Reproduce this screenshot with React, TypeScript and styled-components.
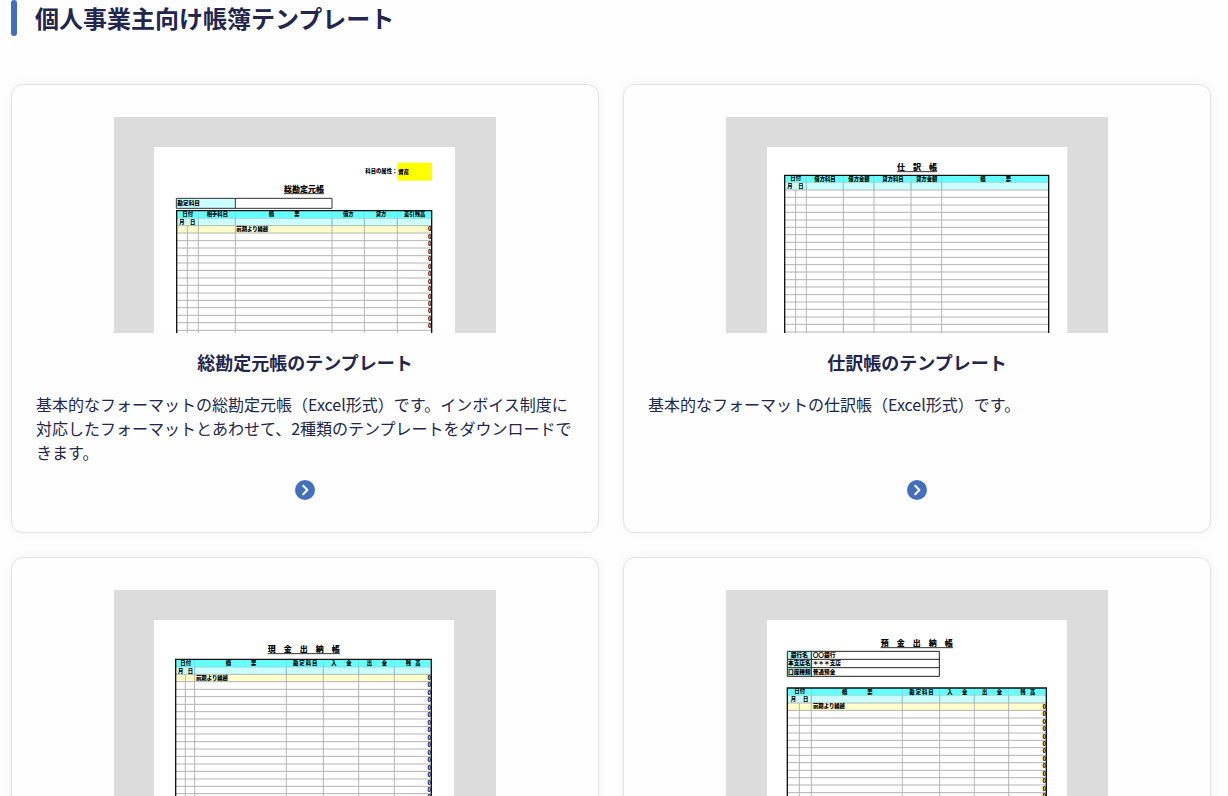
import React from "react";
import styled, { createGlobalStyle } from "styled-components";

const GlobalStyle = createGlobalStyle`
  *, *::before, *::after {
    box-sizing: border-box;
  }
  body {
    margin: 0;
    background: #fefefe;
    color: #22264c;
    font-family: "Noto Sans CJK JP", "Noto Sans", sans-serif;
    font-size: 16px;
    line-height: 24px;
  }
`;

const Page = styled.main`
  padding: 0 17px 24px 11px;
`;

const Heading = styled.h2`
  display: flex;
  gap: 18px;
  margin: 0 0 48px;
  font-size: 24px;
  line-height: 36px;
  font-weight: 700;

  &::before {
    content: "";
    width: 6px;
    border-radius: 3px;
    background: #446fbd;
  }
`;

const CardGrid = styled.div`
  display: grid;
  grid-template-columns: repeat(2, minmax(0, 1fr));
  gap: 24px;
`;

const Card = styled.a`
  display: flex;
  flex-direction: column;
  align-items: center;
  gap: 16px;
  padding: 32px 24px;
  border: 1px solid #e2e2e2;
  border-radius: 12px;
  background: #fefefe;
  box-shadow: 0 0 12px rgba(0, 0, 0, 0.05);
  color: inherit;
  text-decoration: none;
`;

const Thumbnail = styled.svg`
  display: block;
  width: 382px;
  max-width: 100%;
  height: auto;
  background: #dcdcdc;
`;

const CardTitle = styled.h3`
  margin: 0;
  font-size: 18px;
  line-height: 27px;
  font-weight: 700;
  text-align: center;
`;

const Description = styled.p`
  align-self: stretch;
  flex: 1;
  margin: 0;
`;

const ArrowBadge = styled.svg`
  display: block;
  flex: none;
  width: 20px;
  height: 20px;
`;

const SheetText = styled.text<{ $size?: number }>`
  font-family: "Noto Sans CJK JP", sans-serif;
  font-size: ${({ $size = 16 }) => $size}px;
  font-weight: 900;
  fill: #000;
`;

type Label = [text: string, x: number, y: number];

interface Sheet {
  origin: [number, number];
  paper: [number, number, number];
  title: Label;
  titleWidth: number;
  left: number;
  right: number;
  top: number;
  subTop: number;
  bodyTop: number;
  columns: number[];
  headers: Label[];
  carried?: Label;
  extra?: React.ReactNode;
}

const ROW = 22.4;
const BOTTOM = 600;
const VIEW_HEIGHT = 648;

/* Drawn at three units to the pixel, so the sheet scales like a picture. */
function SheetPreview({ sheet, label }: { sheet: Sheet; label: string }) {
  const { left, right, top, subTop, bodyTop, columns } = sheet;
  const width = right - left;
  const rows: number[] = [];
  for (let i = 0; bodyTop + i * ROW < BOTTOM; i += 1) {
    rows.push(Math.round(bodyTop + i * ROW));
  }
  const balanceRows = rows.filter((y) => y + ROW + sheet.origin[1] <= VIEW_HEIGHT);
  const [paperLeft, paperTop, paperRight] = sheet.paper;
  const [title, titleX, titleY] = sheet.title;

  return (
    <Thumbnail viewBox={`0 0 1146 ${VIEW_HEIGHT}`} role="img" aria-label={label}>
      <g transform={`translate(${sheet.origin.join(" ")})`}>
        <rect x={paperLeft} y={paperTop} width={paperRight - paperLeft} height={650} fill="#fff" />
        <SheetText $size={24} x={titleX} y={titleY}>{title}</SheetText>
        <path d={`M${titleX} ${titleY + 5}h${sheet.titleWidth}`} stroke="#333" strokeWidth={3} />
        {sheet.extra}
        <rect x={left} y={top} width={width} height={subTop - top} fill="#66ffff" />
        <rect x={left} y={subTop} width={width} height={bodyTop - subTop} fill="#ccffff" />
        {sheet.carried && <rect x={left} y={bodyTop} width={width} height={ROW} fill="#ffffcc" />}
        <g stroke="#b4b4b4" strokeWidth={3}>
          {rows.map((y) => <path key={y} d={`M${left} ${y}H${right}`} />)}
          {columns.map((x, i) => (
            <path key={x} d={`M${x} ${i === 0 ? bodyTop : subTop}V${BOTTOM}`} />
          ))}
        </g>
        <g stroke="#7fcccc" strokeWidth={2}>
          <path d={`M${left} ${subTop}H${right}`} />
          {columns.slice(1).map((x) => <path key={x} d={`M${x} ${top}V${bodyTop}`} />)}
        </g>
        <path d={`M${left} ${BOTTOM}V${top}H${right}V${BOTTOM}`} fill="none" stroke="#111" strokeWidth={4} />
        {sheet.headers.map(([text, x, y]) => (
          <SheetText key={`${text}${x}`} x={x} y={y} dy={6} textAnchor="middle">{text}</SheetText>
        ))}
        {sheet.carried && (
          <SheetText x={sheet.carried[1]} y={sheet.carried[2]} dy={6}>{sheet.carried[0]}</SheetText>
        )}
        {sheet.carried && balanceRows.map((y) => (
          <SheetText key={y} $size={17} x={right - 1} y={y + 17} textAnchor="end">0</SheetText>
        ))}
      </g>
    </Thumbnail>
  );
}

const generalLedger: Sheet = {
  origin: [108, 84],
  paper: [12, 6, 915],
  title: ["総勘定元帳", 402, 141],
  titleWidth: 120,
  left: 80,
  right: 845,
  top: 197,
  subTop: 220,
  bodyTop: 242,
  columns: [112, 145, 256, 546, 643, 742],
  headers: [
    ["日付", 113, 207], ["相手科目", 202, 207], ["摘", 364, 207], ["要", 441, 207],
    ["借方", 595, 207], ["貸方", 693, 207], ["差引残高", 794, 207],
    ["月", 96, 231], ["日", 128, 231],
  ],
  carried: ["前期より繰越", 259, 253],
  extra: (
    <>
      <rect x={742} y={53} width={104} height={54} fill="#ffff00" />
      <SheetText x={646} y={84}>科目の属性：</SheetText>
      <SheetText x={745} y={87}>資産</SheetText>
      <rect x={79} y={160} width={177} height={30} fill="#ccffff" />
      <path d="M79 160H546V190H79ZM256 160V190" fill="none" stroke="#333" strokeWidth={3} />
      <SheetText $size={17} x={82} y={180}>勘定科目</SheetText>
    </>
  ),
};

const journal: Sheet = {
  origin: [117, 84],
  paper: [6, 6, 907],
  title: ["仕　訳　帳", 396, 75],
  titleWidth: 120,
  left: 59,
  right: 851,
  top: 91,
  subTop: 112,
  bodyTop: 135,
  columns: [92, 124, 235, 327, 438, 530],
  headers: [
    ["日付", 92, 100], ["借方科目", 180, 103], ["借方金額", 282, 103],
    ["貸方科目", 384, 103], ["貸方金額", 485, 103], ["摘", 654, 103], ["要", 730, 103],
    ["月", 75, 124], ["日", 108, 124],
  ],
};

const cashBook: Sheet = {
  origin: [108, 75],
  paper: [12, 15, 912],
  title: ["現　金　出　納　帳", 353, 111],
  titleWidth: 217,
  left: 77,
  right: 844,
  top: 133,
  subTop: 156,
  bodyTop: 178,
  columns: [106, 134, 409, 520, 626, 733],
  headers: [
    ["日付", 107, 145], ["摘", 235, 145], ["要", 311, 145],
    ["勘", 437, 145], ["定", 456, 145], ["科", 475, 145], ["目", 494, 145],
    ["入", 552, 145], ["金", 597, 145], ["出", 658, 145], ["金", 703, 145],
    ["残", 775, 145], ["高", 804, 145], ["月", 92, 168], ["日", 121, 168],
  ],
  carried: ["前期より繰越", 138, 190],
};

const depositBook: Sheet = {
  origin: [117, 75],
  paper: [6, 15, 906],
  title: ["預　金　出　納　帳", 347, 93],
  titleWidth: 217,
  left: 67,
  right: 844,
  top: 219,
  subTop: 241,
  bodyTop: 264,
  columns: [103, 139, 412, 524, 628, 731],
  headers: [
    ["日付", 104, 229], ["摘", 239, 231], ["要", 315, 231],
    ["勘", 441, 231], ["定", 460, 231], ["科", 479, 231], ["目", 498, 231],
    ["入", 555, 231], ["金", 599, 231], ["出", 659, 231], ["金", 703, 231],
    ["残", 774, 231], ["高", 803, 231], ["月", 85, 253], ["日", 122, 253],
  ],
  carried: ["前期より繰越", 144, 274],
  extra: (
    <>
      <rect x={67} y={109} width={72} height={75} fill="#b3f5f5" />
      <path
        d="M67 109H523V184H67ZM139 109V184M67 133H523M67 158H523"
        fill="none"
        stroke="#222"
        strokeWidth={3}
      />
      <SheetText $size={17} x={103} y={127} textAnchor="middle">銀行名</SheetText>
      <SheetText $size={17} x={103} y={151} textAnchor="middle">本支店名</SheetText>
      <SheetText $size={17} x={103} y={177} textAnchor="middle">口座種類</SheetText>
      <SheetText $size={17} x={143} y={127}>〇〇銀行</SheetText>
      <SheetText $size={17} x={143} y={151}>＊＊＊支店</SheetText>
      <SheetText $size={17} x={143} y={177}>普通預金</SheetText>
    </>
  ),
};

const templates = [
  {
    title: "総勘定元帳のテンプレート",
    description:
      "基本的なフォーマットの総勘定元帳（Excel形式）です。インボイス制度に対応したフォーマットとあわせて、2種類のテンプレートをダウンロードできます。",
    sheet: generalLedger,
  },
  {
    title: "仕訳帳のテンプレート",
    description: "基本的なフォーマットの仕訳帳（Excel形式）です。",
    sheet: journal,
  },
  { title: "現金出納帳のテンプレート", sheet: cashBook },
  { title: "預金出納帳のテンプレート", sheet: depositBook },
];

export default function App() {
  return (
    <>
      <GlobalStyle />
      <Page lang="ja">
        <Heading>個人事業主向け帳簿テンプレート</Heading>
        <CardGrid>
          {templates.map(({ title, description, sheet }) => (
            <Card key={title} href="#">
              <SheetPreview sheet={sheet} label={title} />
              <CardTitle>{title}</CardTitle>
              {description && <Description>{description}</Description>}
              <ArrowBadge viewBox="0 0 20 20" aria-hidden="true">
                <circle cx="10" cy="10" r="10" fill="#446fbd" />
                <path
                  d="M8.2 5.8 12.4 10 8.2 14.2"
                  fill="none"
                  stroke="#fff"
                  strokeWidth="2"
                  strokeLinecap="round"
                  strokeLinejoin="round"
                />
              </ArrowBadge>
            </Card>
          ))}
        </CardGrid>
      </Page>
    </>
  );
}
